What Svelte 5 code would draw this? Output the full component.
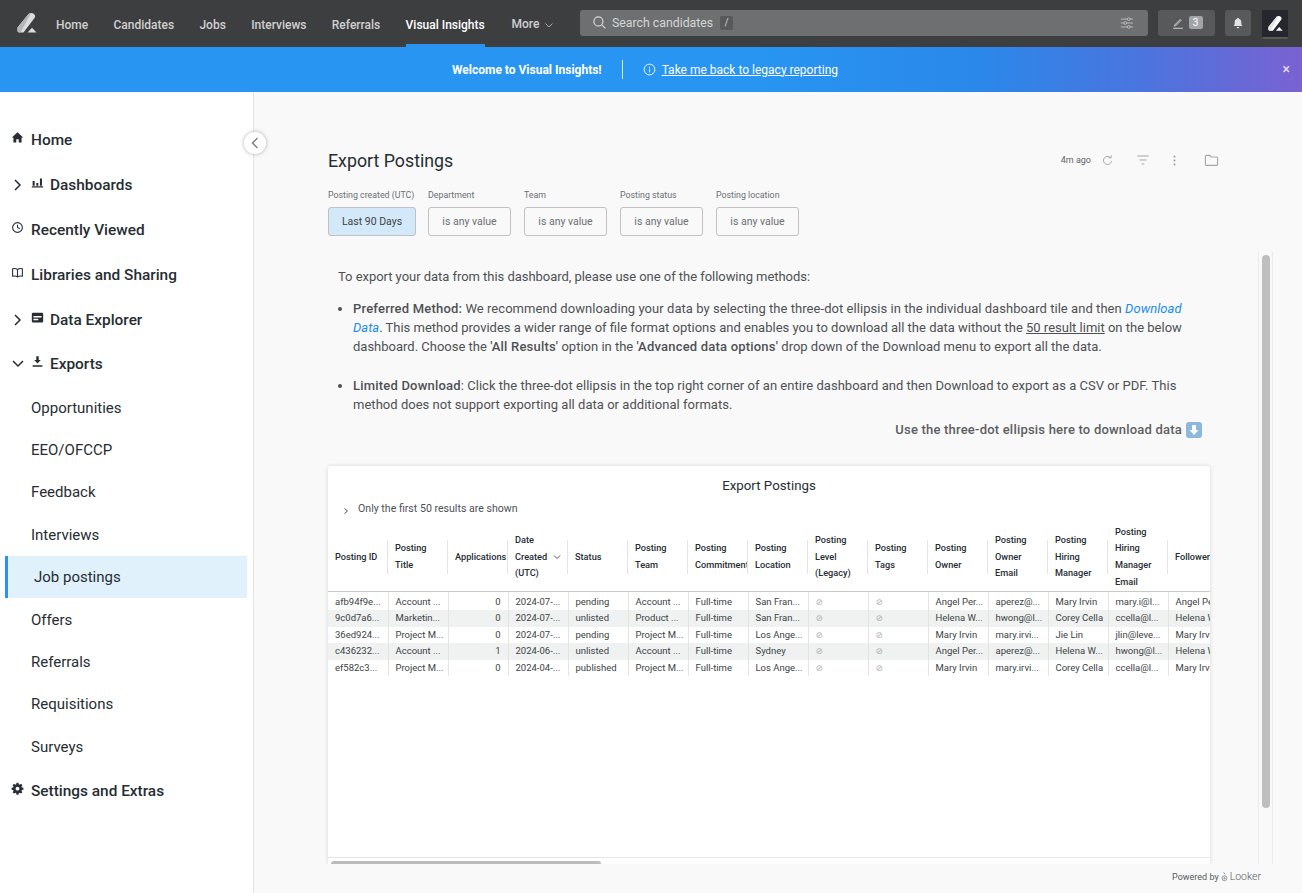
<script>
  const nav = ['Home', 'Candidates', 'Jobs', 'Interviews', 'Referrals', 'Visual Insights'];
  const filters = [
    ['Posting created (UTC)', 'Last 90 Days'],
    ['Department', 'is any value'],
    ['Team', 'is any value'],
    ['Posting status', 'is any value'],
    ['Posting location', 'is any value']
  ];
  const subItems = ['Opportunities', 'EEO/OFCCP', 'Feedback', 'Interviews', 'Job postings', 'Offers', 'Referrals', 'Requisitions', 'Surveys'];
  const headers = [
    ['Posting ID'], ['Posting', 'Title'], ['Applications'], ['Date', 'Created', '(UTC)'], ['Status'],
    ['Posting', 'Team'], ['Posting', 'Commitment'], ['Posting', 'Location'], ['Posting', 'Level', '(Legacy)'],
    ['Posting', 'Tags'], ['Posting', 'Owner'], ['Posting', 'Owner', 'Email'], ['Posting', 'Hiring', 'Manager'],
    ['Posting', 'Hiring', 'Manager', 'Email'], ['Followers']
  ];
  const rows = [
    ['afb94f9e...', 'Account ...', '0', '2024-07-...', 'pending', 'Account ...', 'Full-time', 'San Fran...', '⊘', '⊘', 'Angel Per...', 'aperez@...', 'Mary Irvin', 'mary.i@l...', 'Angel Perez'],
    ['9c0d7a6...', 'Marketin...', '0', '2024-07-...', 'unlisted', 'Product ...', 'Full-time', 'San Fran...', '⊘', '⊘', 'Helena W...', 'hwong@l...', 'Corey Cella', 'ccella@l...', 'Helena Wong'],
    ['36ed924...', 'Project M...', '0', '2024-07-...', 'pending', 'Project M...', 'Full-time', 'Los Ange...', '⊘', '⊘', 'Mary Irvin', 'mary.irvi...', 'Jie Lin', 'jlin@leve...', 'Mary Irvin'],
    ['c436232...', 'Account ...', '1', '2024-06-...', 'unlisted', 'Account ...', 'Full-time', 'Sydney', '⊘', '⊘', 'Angel Per...', 'aperez@...', 'Helena W...', 'hwong@l...', 'Helena Wong'],
    ['ef582c3...', 'Project M...', '0', '2024-04-...', 'published', 'Project M...', 'Full-time', 'Los Ange...', '⊘', '⊘', 'Mary Irvin', 'mary.irvi...', 'Corey Cella', 'ccella@l...', 'Mary Irvin']
  ];
</script>

{#snippet logo(color, shade)}
  <svg viewBox="0 0 20 20" class="logo">
    <path fill={color} d="M.5 14.500 11.500 1C13-.3 15.500-.3 17 1c1.300 1.200 1.300 3 .5 4L6.500 19.500h-4C1.200 19.500.5 18.500.5 17.500Z" />
    <path fill={shade} d="M3.500 19.500h-1C1.200 19.500.5 18.500.5 17.500v-3L11.500 1c.7-.6 1.600-.9 2.500-.9Z" />
    <path fill={color} d="M15 14.700 19.500 19.500H10.500Z" />
  </svg>
{/snippet}

<div class="page">
  <header class="topbar">
    <div class="brand">{@render logo('#dcdcdc', '#b5b5b5')}</div>
    <nav class="mainnav">
      {#each nav as item}
        <span class="navitem" class:active={item === 'Visual Insights'}>{item}</span>
      {/each}
      <span class="navitem more">More
        <svg viewBox="0 0 10 10" class="morechev"><path d="M1.500 3.500 5 7l3.500-3.500" /></svg>
      </span>
    </nav>
    <div class="search">
      <svg viewBox="0 0 16 16" class="searchicon"><circle cx="6.800" cy="6.800" r="4.800" /><path d="m10.300 10.300 4 4" /></svg>
      <span>Search candidates</span>
      <kbd>/</kbd>
      <svg viewBox="0 0 16 16" class="sliders">
        <path d="M1 3.500h14M1 8h14M1 12.500h14" />
        <circle cx="10" cy="3.500" r="1.600" /><circle cx="6" cy="8" r="1.600" /><circle cx="10" cy="12.500" r="1.600" />
      </svg>
    </div>
    <div class="notes">
      <svg viewBox="0 0 16 16" class="pen"><path d="M4 10.500 10.500 4l1 1L5 11.500H4ZM2.500 14h11" /></svg>
      <span class="count">3</span>
    </div>
    <div class="bell">
      <svg viewBox="0 0 16 16"><path d="M8 2c.6 0 1 .4 1 1 2 .5 2.800 2 2.800 4v2.500L13 11.500H3l1.200-2V7c0-2 .8-3.500 2.800-4 0-.6.4-1 1-1ZM6.500 12.500h3C9.500 13.500 8.800 14 8 14s-1.500-.5-1.500-1.500Z" /></svg>
    </div>
    <div class="account">{@render logo('#ffffff', '#e4e4e4')}</div>
  </header>

  <div class="banner">
    <strong>Welcome to Visual Insights!</strong>
    <span class="bannersep"></span>
    <svg viewBox="0 0 14 14" class="infoicon"><circle cx="7" cy="7" r="5.800" /><path d="M7 6.200v3.800M7 4v1.200" /></svg>
    <span class="bannerlink">Take me back to legacy reporting</span>
    <span class="bannerclose">×</span>
  </div>

  <div class="body">
    <aside class="sidebar">
      <div class="top noarrow">
        <svg viewBox="0 0 16 16" class="ico" fill="#262d33"><path d="M8 1.500 1 8h2v6h3.500v-4h3v4H13V8h2Z" /></svg>
        Home
      </div>
      <div class="top">
        <svg viewBox="0 0 10 14" class="chev"><path d="m2 2 5 5-5 5" /></svg>
        <svg viewBox="0 0 16 16" class="ico" fill="#262d33"><path d="M2 6h2.500v6H2ZM6.500 8.500H9V12H6.500ZM11 3h2.500v9H11ZM1 12.500h14V14H1Z" /></svg>
        Dashboards
      </div>
      <div class="top noarrow">
        <svg viewBox="0 0 16 16" class="ico line"><circle cx="8" cy="8" r="6" /><path d="M8 4.500V8l2.800 1.500" /></svg>
        Recently Viewed
      </div>
      <div class="top noarrow">
        <svg viewBox="0 0 16 16" class="ico line"><path d="M8 4.500C6.500 3.200 4 3 2 3.500v9c2-.5 4.500-.3 6 1 1.500-1.300 4-1.500 6-1v-9c-2-.5-4.500-.3-6 1ZM8 4.500v9" /></svg>
        Libraries and Sharing
      </div>
      <div class="top">
        <svg viewBox="0 0 10 14" class="chev"><path d="m2 2 5 5-5 5" /></svg>
        <svg viewBox="0 0 16 16" class="ico" fill="#262d33"><path d="M2.500 2h11A1.500 1.500 0 0 1 15 3.500v9a1.500 1.500 0 0 1-1.500 1.500h-11A1.500 1.500 0 0 1 1 12.500v-9A1.500 1.500 0 0 1 2.500 2ZM3 6v2h10V6Zm0 3.500v2h6v-2Z" /></svg>
        Data Explorer
      </div>
      <div class="top">
        <svg viewBox="0 0 14 10" class="chev down"><path d="m2 2 5 5 5-5" /></svg>
        <svg viewBox="0 0 16 16" class="ico" fill="#262d33"><path d="M6.500 1.500h3V6H12L8 10.500 4 6h2.500ZM2 12.500h12V14.500H2Z" /></svg>
        Exports
      </div>
      {#each subItems as item}
        <div class="sub" class:current={item === 'Job postings'}>{item}</div>
      {/each}
      <div class="top noarrow">
        <svg viewBox="0 0 16 16" class="ico" fill="#262d33"><path fill-rule="evenodd" d="M6.800 1h2.400l.3 1.900 1.200.5 1.600-1.100 1.700 1.700-1.100 1.600.5 1.200 1.900.3v2.400l-1.900.3-.5 1.200 1.100 1.600-1.700 1.700-1.600-1.100-1.200.5-.3 1.900H6.800l-.3-1.900-1.200-.5-1.600 1.100L2 12.600l1.100-1.600-.5-1.200L.7 9.500V7.100l1.900-.3.500-1.200L2 4l1.700-1.700 1.600 1.100 1.200-.5ZM8 5.800a2.400 2.400 0 1 0 0 4.800 2.400 2.400 0 0 0 0-4.800Z" /></svg>
        Settings and Extras
      </div>
    </aside>

    <button class="collapse" aria-label="Collapse">
      <svg viewBox="0 0 10 14"><path d="M7.500 2 2.500 7l5 5" /></svg>
    </button>

    <main class="main">
      <div class="titlebar">
        <h1>Export Postings</h1>
        <div class="tools">
          <span class="ago">4m ago</span>
          <svg viewBox="0 0 16 16" class="tool refresh"><path d="M13 8.500A5 5 0 1 1 11.500 4.300M12.500 1.500v3.300H9.200" /></svg>
          <svg viewBox="0 0 16 16" class="tool filter"><path d="M1.500 3.500h13M4 8h8M6.500 12.500h3" /></svg>
          <svg viewBox="0 0 16 16" class="tool dots"><circle cx="8" cy="3" r="1.200" /><circle cx="8" cy="8" r="1.200" /><circle cx="8" cy="13" r="1.200" /></svg>
          <svg viewBox="0 0 16 16" class="tool folder"><path d="M1.500 3.500c0-.6.4-1 1-1h3.700l1.500 1.700h5.800c.6 0 1 .4 1 1v7c0 .6-.4 1-1 1h-11c-.6 0-1-.4-1-1Z" /></svg>
        </div>
      </div>

      <div class="filters">
        {#each filters as [label, value], i}
          <div class="filter-col" class:first={i === 0}>
            <span class="flabel">{label}</span>
            <span class="fbtn" class:on={i === 0}>{value}</span>
          </div>
        {/each}
      </div>

      <div class="scroller">
        <div class="scrollcontent">
          <section class="notice">
            <p class="lead">To export your data from this dashboard, please use one of the following methods:</p>
            <ul>
              <li>
                <b>Preferred Method:</b> We recommend downloading your data by selecting the three-dot ellipsis in the individual dashboard tile and then <em>Download Data</em>. This method provides a wider range of file format options and enables you to download all the data without the <u>50 result limit</u> on the below dashboard. Choose the <b>'All Results'</b> option in the <b>'Advanced data options'</b> drop down of the Download menu to export all the data.
              </li>
              <li>
                <b>Limited Download</b>: Click the three-dot ellipsis in the top right corner of an entire dashboard and then Download to export as a CSV or PDF. This method does not support exporting all data or additional formats.
              </li>
            </ul>
            <p class="hint">
              Use the three-dot ellipsis here to download data
              <svg viewBox="0 0 16 16" class="emoji">
                <rect width="16" height="16" rx="3" fill="#8cb8dd" />
                <path d="M6 3h4v5h2.500L8 13 3.500 8H6Z" fill="#fff" />
              </svg>
            </p>
          </section>

          <section class="card">
            <h2>Export Postings</h2>
            <div class="cardnote">
              <svg viewBox="0 0 6 8" class="notechev"><path d="m1.500 1.500 3 2.500-3 2.500" /></svg>
              Only the first 50 results are shown
            </div>
            <div class="tablewrap">
              <table>
                <thead>
                  <tr>
                    {#each headers as lines, i}
                      <th class:sorted={i === 3}>
                        <span class="thinner">
                          <span class="thtext">
                            {#each lines as line}<span>{line}</span>{/each}
                          </span>
                          {#if i === 3}
                            <svg viewBox="0 0 10 10" class="sortchev"><path d="M2 3.500 5 6.500l3-3" /></svg>
                          {/if}
                        </span>
                      </th>
                    {/each}
                  </tr>
                </thead>
                <tbody>
                  {#each rows as row}
                    <tr>
                      {#each row as cell, i}
                        <td class:num={i === 2} class:nil={cell === '⊘'}>{cell}</td>
                      {/each}
                    </tr>
                  {/each}
                </tbody>
              </table>
            </div>
            <div class="hscroll"><div class="hthumb"></div></div>
          </section>
        </div>
        <div class="rail"><div class="thumb"></div></div>
      </div>

      <footer class="powered">
        Powered by
        <svg viewBox="0 0 8 12" class="lookermark"><circle cx="4" cy="8" r="2.800" /><circle cx="4" cy="8" r=".8" /><path d="M3 1.200 4.500 3.500" /></svg>
        <span class="looker">Looker</span>
      </footer>
    </main>
  </div>
</div>

<style>
  :global(body) {
    margin: 0;
    font-family: Roboto, "Liberation Sans", sans-serif;
    background: #fff;
  }
  svg {
    display: block;
    flex: none;
  }
  .page {
    height: 893px;
    display: flex;
    flex-direction: column;
    overflow: hidden;
  }

  /* top nav */
  .topbar {
    height: 47px;
    flex: none;
    background: #3d3e40;
    display: flex;
    align-items: center;
    color: #d0d0d0;
  }
  .brand {
    width: 56px;
    padding-left: 17px;
    box-sizing: border-box;
    margin-top: -1px;
  }
  .logo {
    width: 20px;
    height: 20px;
  }
  .mainnav {
    display: flex;
    gap: 25.300px;
    height: 47px;
    width: 524px;
    flex: none;
  }
  .navitem {
    height: 47px;
    line-height: 50px;
    font-size: 12px;
    font-weight: 500;
    box-sizing: border-box;
  }
  .navitem.active {
    color: #fff;
    border-bottom: 3px solid #2b92f1;
  }
  .more {
    display: flex;
    align-items: center;
    gap: 5px;
    margin-left: 1.500px;
  }
  .morechev {
    width: 10px;
    height: 10px;
    margin-top: 3px;
    fill: none;
    stroke: #aaa;
  }
  .search {
    width: 568px;
    height: 26px;
    background: #6e6f71;
    border-radius: 3px;
    display: flex;
    align-items: center;
    font-size: 12.300px;
    color: #d6d6d6;
    margin-top: -2px;
    box-sizing: border-box;
    padding: 0 14px 0 12px;
    flex: none;
  }
  .searchicon {
    width: 15px;
    height: 15px;
    margin-right: 5px;
    fill: none;
    stroke: #d6d6d6;
    stroke-width: 1.300;
  }
  kbd {
    font: inherit;
    font-size: 10px;
    width: 13px;
    height: 14px;
    line-height: 14px;
    text-align: center;
    background: #58595b;
    border-radius: 2px;
    margin-left: 7px;
  }
  .sliders {
    width: 14px;
    height: 14px;
    margin-left: auto;
    fill: #6e6f71;
    stroke: #c2c2c2;
  }
  .notes {
    width: 57px;
    height: 26px;
    margin: -2px 0 0 10px;
    background: #58595b;
    border-radius: 3px;
    display: flex;
    align-items: center;
    justify-content: center;
    gap: 4px;
    flex: none;
  }
  .pen {
    width: 14px;
    height: 14px;
    fill: none;
    stroke: #d4d4d4;
    stroke-width: 1.100;
  }
  .count {
    width: 14px;
    height: 13px;
    line-height: 13px;
    font-size: 10px;
    text-align: center;
    background: #a4a5a6;
    color: #fff;
    border-radius: 2px;
  }
  .bell {
    width: 26px;
    height: 26px;
    margin: -2px 0 0 10px;
    background: #58595b;
    border-radius: 3px;
    display: flex;
    align-items: center;
    justify-content: center;
    flex: none;
  }
  .bell svg {
    width: 14px;
    height: 14px;
    fill: #e2e2e2;
  }
  .account {
    width: 26px;
    height: 29px;
    margin: 1px 0 0 11px;
    background: #25262e;
    border-bottom: 2px solid #58595b;
    border-radius: 0 0 2px 2px;
    box-sizing: border-box;
    display: flex;
    align-items: center;
    justify-content: center;
    flex: none;
  }
  .account .logo {
    width: 15px;
    height: 15px;
  }

  /* banner */
  .banner {
    height: 45px;
    flex: none;
    background: linear-gradient(90deg, #2895f3 0%, #2895f3 58%, #2a88ea 75%, #4c74de 88%, #7a62d2 100%);
    color: #fff;
    font-size: 12px;
    display: flex;
    align-items: center;
    padding-left: 452px;
    box-sizing: border-box;
    position: relative;
  }
  .banner strong {
    font-weight: 700;
  }
  .bannersep {
    width: 1px;
    height: 19px;
    background: #d5e9fc;
    margin: 0 20px 0 20px;
  }
  .infoicon {
    width: 13px;
    height: 13px;
    margin-right: 6px;
    fill: none;
    stroke: #fff;
    stroke-width: 1;
  }
  .bannerlink {
    text-decoration: underline;
  }
  .bannerclose {
    position: absolute;
    right: 12px;
    top: 14px;
    font-size: 14px;
    line-height: 16px;
    color: #e6e3f8;
  }

  /* sidebar */
  .body {
    flex: 1;
    min-height: 0;
    display: flex;
    position: relative;
  }
  .sidebar {
    width: 254px;
    flex: none;
    box-sizing: border-box;
    border-right: 1px solid #e4e4e4;
    padding: 25.600px 6px 0 5px;
    color: #262d33;
  }
  .top {
    height: 44.800px;
    box-sizing: border-box;
    padding-top: 1px;
    display: flex;
    align-items: center;
    font-size: 15.400px;
    font-weight: 500;
    padding-left: 7px;
  }
  .ico {
    width: 13px;
    height: 13px;
    margin: -5px 6px 0 0;
  }
  .ico.line {
    fill: none;
    stroke: #262d33;
    stroke-width: 1.300;
  }
  .chev {
    width: 10px;
    height: 14px;
    margin: 0 8px 0 1px;
    fill: none;
    stroke: #262d33;
    stroke-width: 1.500;
  }
  .chev.down {
    width: 14px;
    height: 10px;
    margin: 0 6px 0 -1px;
  }
  .noarrow .ico {
    margin-right: 7px;
  }
  .noarrow {
    padding-left: 6px;
  }
  .sub {
    height: 42.400px;
    display: flex;
    align-items: center;
    font-size: 15px;
    padding-left: 26px;
    box-sizing: border-box;
  }
  .sub.current {
    background: #e1f1fc;
    border-left: 3px solid #2b92f1;
    padding-left: 26px;
  }
  .collapse {
    position: absolute;
    left: 244px;
    top: 39.500px;
    width: 22px;
    height: 22px;
    border-radius: 50%;
    border: none;
    padding: 0;
    background: #fff;
    box-shadow: 0 0 4px rgba(0, 0, 0, .3);
    display: flex;
    align-items: center;
    justify-content: center;
  }
  .collapse svg {
    width: 10px;
    height: 14px;
    fill: none;
    stroke: #7d8287;
    stroke-width: 1.500;
  }

  /* dashboard */
  .main {
    flex: 1;
    min-width: 0;
    background: #f9f9f9;
    display: flex;
    flex-direction: column;
    padding-left: 74px;
  }
  .titlebar {
    height: 30px;
    margin-top: 53px;
    display: flex;
    align-items: center;
    justify-content: space-between;
    padding-right: 83px;
  }
  h1 {
    margin: 0;
    font-size: 17.800px;
    font-weight: 400;
    color: #262d33;
  }
  .tools {
    display: flex;
    align-items: center;
  }
  .ago {
    font-size: 9px;
    color: #5f6368;
    margin-right: 10px;
  }
  .tool {
    width: 13px;
    height: 13px;
    fill: none;
    stroke: #a8a8a8;
    stroke-width: 1.200;
  }
  .filter {
    margin-left: 22px;
    width: 14px;
    height: 14px;
  }
  .dots {
    margin-left: 18px;
    fill: #999;
    stroke: none;
  }
  .folder {
    margin-left: 23px;
    width: 15px;
    height: 15px;
  }
  .filters {
    display: flex;
    gap: 13px;
    margin-top: 14px;
  }
  .filter-col {
    display: flex;
    flex-direction: column;
    width: 83px;
  }
  .filter-col.first {
    width: 88px;
    margin-right: -1px;
  }
  .flabel {
    font-size: 8.800px;
    line-height: 12px;
    color: #6a6f74;
    white-space: nowrap;
    height: 18px;
  }
  .fbtn {
    height: 29px;
    line-height: 27px;
    box-sizing: border-box;
    border: 1px solid #bfc1c4;
    border-radius: 3px;
    font-size: 10.500px;
    text-align: center;
    color: #6a6f74;
  }
  .fbtn.on {
    background: #d3e8f9;
    color: #3c4345;
  }

  .scroller {
    height: 611.500px;
    margin: 16px 0 0 -4px;
    padding-left: 4px;
    display: flex;
    overflow: hidden;
  }
  .scrollcontent {
    width: 882px;
    flex: none;
  }
  .notice {
    font-size: 13px;
    line-height: 19px;
    color: #4e5154;
    padding: 15px 20px 0 10px;
    height: 214px;
    box-sizing: border-box;
  }
  .lead {
    margin: 0;
    letter-spacing: -.04px;
  }
  ul {
    margin: 13px 0 0;
    padding-left: 15px;
  }
  li {
    margin-bottom: 20px;
  }
  li:first-child::first-line {
    letter-spacing: .05px;
  }
  li:last-child {
    letter-spacing: .03px;
  }
  .notice b {
    font-weight: 500;
    letter-spacing: .2px;
  }
  em {
    color: #1a8cf0;
  }
  .hint {
    margin: -14px -12px 0 0;
    display: flex;
    justify-content: flex-end;
    align-items: center;
    gap: 4px;
    font-weight: 500;
    letter-spacing: .2px;
    color: #5c5f62;
  }
  .emoji {
    width: 16px;
    height: 16px;
  }

  .card {
    background: #fff;
    height: 398px;
    border-radius: 3px 3px 0 0;
    box-shadow: 0 0 4px rgba(0, 0, 0, .14);
    display: flex;
    flex-direction: column;
    overflow: hidden;
  }
  h2 {
    margin: 0;
    padding-top: 11px;
    text-align: center;
    font-size: 13.300px;
    line-height: 17px;
    font-weight: 400;
    color: #262d33;
  }
  .cardnote {
    display: flex;
    align-items: center;
    font-size: 10.600px;
    color: #4e5154;
    padding: 8px 0 0 15px;
    gap: 9px;
    line-height: 14px;
  }
  .notechev {
    width: 6px;
    height: 8px;
    margin-top: 3px;
    fill: none;
    stroke: #4e5154;
  }
  .tablewrap {
    flex: 1;
    min-height: 0;
    overflow: hidden;
    margin-top: 5px;
  }
  table {
    border-collapse: collapse;
    table-layout: fixed;
    width: 900px;
  }
  th {
    width: 60px;
    height: 68px;
    padding: 2px 0 0;
    border-bottom: 1px solid #c9c9c9;
    font-size: 9.200px;
    font-weight: 500;
    color: #262d33;
    text-align: left;
    position: relative;
  }
  th::after {
    content: '';
    position: absolute;
    right: 0;
    top: 50%;
    height: 34px;
    margin-top: -16px;
    border-right: 1px solid #e4e4e4;
  }
  th:last-child::after {
    display: none;
  }
  .thinner {
    display: flex;
    align-items: center;
    padding-left: 7px;
    white-space: nowrap;
    overflow: hidden;
  }
  .thtext {
    display: flex;
    flex-direction: column;
    line-height: 16.600px;
  }
  .sortchev {
    width: 10px;
    height: 10px;
    margin-left: 5px;
    fill: none;
    stroke: #4e5154;
  }
  td {
    height: 16.500px;
    padding: 0 0 0 7px;
    font-size: 9.500px;
    line-height: 12px;
    color: #3c4345;
    border-right: 1px solid #e4e4e4;
    white-space: nowrap;
    overflow: hidden;
    box-sizing: border-box;
  }
  tbody tr:first-child td {
    height: 18.500px;
    padding-top: 2px;
  }
  td:last-child {
    border-right: none;
  }
  td.num {
    text-align: right;
    padding: 0 7px 0 0;
  }
  td.nil {
    color: #aaa;
    font-family: "DejaVu Sans", sans-serif;
    font-size: 8.500px;
  }
  tbody tr:nth-child(even) td {
    background: #eff2f1;
  }
  .hscroll {
    height: 3px;
    border-top: 1px solid #e6e6e6;
    padding: 3px 0 0 3px;
    flex: none;
  }
  .hthumb {
    width: 270px;
    height: 6px;
    background: #bcbcbc;
    border-radius: 3px 3px 0 0;
  }

  .rail {
    width: 15px;
    margin-left: 48px;
    border-left: 1px solid #ececec;
    border-right: 1px solid #ececec;
    box-sizing: border-box;
    padding: 3px 2px 0 3px;
    flex: none;
  }
  .thumb {
    height: 553px;
    background: #bebebe;
    border-radius: 4px;
  }
  .powered {
    height: 26px;
    display: flex;
    align-items: center;
    justify-content: flex-end;
    padding-right: 41px;
    font-size: 9px;
    color: #55595d;
    gap: 2px;
  }
  .lookermark {
    width: 7px;
    height: 11px;
    fill: none;
    stroke: #55595d;
    stroke-width: .7;
  }
  .looker {
    font-weight: 300;
    font-size: 10.500px;
  }
</style>
